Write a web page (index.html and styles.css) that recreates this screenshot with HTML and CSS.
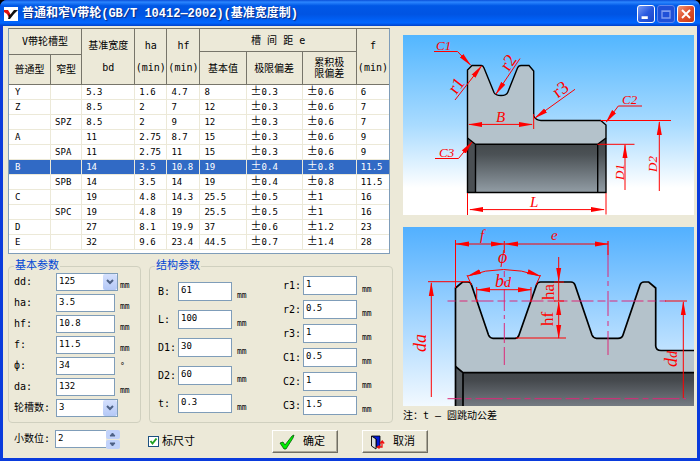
FILE: index.html
```html
<!DOCTYPE html>
<html lang="zh-CN">
<head>
<meta charset="utf-8">
<title>普通和窄V带轮</title>
<link rel="stylesheet" href="styles.css">
</head>
<body>
<div class="window">
  <header class="titlebar">
    <svg class="app-icon" viewBox="0 0 14 14" aria-hidden="true">
      <rect width="14" height="14" fill="#fff"/>
      <path d="M0 3h4l3 5-2 3-2-4-3-2z" fill="#e01010"/>
      <path d="M4 7l2 1 4-5h4l-4 4-4 5H4l1-3z" fill="#111"/>
    </svg>
    <h1>普通和窄V带轮(GB/T 10412—2002)(基准宽度制)</h1>
    <div class="winbtns">
      <button type="button" aria-label="最小化"><svg viewBox="0 0 18 18"><path d="M4 13h7" stroke="#fff" stroke-width="3"/></svg></button>
      <button type="button" class="dim" aria-label="最大化" disabled><svg viewBox="0 0 18 18"><path d="M4.500 5.500h9v8h-9zM4 6h10" fill="none" stroke="#7d9cf0" stroke-width="1.500"/></svg></button>
      <button type="button" class="close" aria-label="关闭"><svg viewBox="0 0 18 18"><path d="M4.500 4.500l9 9M13.500 4.500l-9 9" stroke="#fff" stroke-width="2.200"/></svg></button>
    </div>
  </header>
  <main class="content">
    <div class="columns">
      <section class="left">
        <div class="table-box">
          <table>
            <colgroup><col class="c1"><col class="c2"><col class="c3"><col class="c4"><col class="c5"><col class="c6"><col class="c7"><col class="c8"><col class="c9"></colgroup>
            <thead>
              <tr class="h1"><th colspan="2" rowspan="2">V带轮槽型</th><th rowspan="3" class="tall">基准宽度<br>bd</th><th rowspan="3" class="tall">ha<br>(min)</th><th rowspan="3" class="tall">hf<br>(min)</th><th colspan="3">槽 间 距 e</th><th rowspan="3" class="tall">f<br>(min)</th></tr>
              <tr class="h2"><th rowspan="2">基本值</th><th rowspan="2">极限偏差</th><th rowspan="2">累积极<br>限偏差</th></tr>
              <tr class="h3"><th>普通型</th><th>窄型</th></tr>
            </thead>
            <tbody>
              <tr><td>Y</td><td></td><td>5.3</td><td>1.6</td><td>4.7</td><td>8</td><td><i>±</i>0.3</td><td><i>±</i>0.6</td><td>6</td></tr>
              <tr><td>Z</td><td></td><td>8.5</td><td>2</td><td>7</td><td>12</td><td><i>±</i>0.3</td><td><i>±</i>0.6</td><td>7</td></tr>
              <tr><td></td><td>SPZ</td><td>8.5</td><td>2</td><td>9</td><td>12</td><td><i>±</i>0.3</td><td><i>±</i>0.6</td><td>7</td></tr>
              <tr><td>A</td><td></td><td>11</td><td>2.75</td><td>8.7</td><td>15</td><td><i>±</i>0.3</td><td><i>±</i>0.6</td><td>9</td></tr>
              <tr><td></td><td>SPA</td><td>11</td><td>2.75</td><td>11</td><td>15</td><td><i>±</i>0.3</td><td><i>±</i>0.6</td><td>9</td></tr>
              <tr class="selected"><td>B</td><td></td><td>14</td><td>3.5</td><td>10.8</td><td>19</td><td><i>±</i>0.4</td><td><i>±</i>0.8</td><td>11.5</td></tr>
              <tr><td></td><td>SPB</td><td>14</td><td>3.5</td><td>14</td><td>19</td><td><i>±</i>0.4</td><td><i>±</i>0.8</td><td>11.5</td></tr>
              <tr><td>C</td><td></td><td>19</td><td>4.8</td><td>14.3</td><td>25.5</td><td><i>±</i>0.5</td><td><i>±</i>1</td><td>16</td></tr>
              <tr><td></td><td>SPC</td><td>19</td><td>4.8</td><td>19</td><td>25.5</td><td><i>±</i>0.5</td><td><i>±</i>1</td><td>16</td></tr>
              <tr><td>D</td><td></td><td>27</td><td>8.1</td><td>19.9</td><td>37</td><td><i>±</i>0.6</td><td><i>±</i>1.2</td><td>23</td></tr>
              <tr><td>E</td><td></td><td>32</td><td>9.6</td><td>23.4</td><td>44.5</td><td><i>±</i>0.7</td><td><i>±</i>1.4</td><td>28</td></tr>
            </tbody>
          </table>
        </div>
        <div class="groups">
          <fieldset class="basic">
            <legend>基本参数</legend>
            <div class="rows">
              <div class="row"><label for="dd">dd:</label><span class="select"><select id="dd"><option>125</option></select><svg viewBox="0 0 14 16" aria-hidden="true"><path d="M4 6l3 3 3-3" fill="none" stroke="#4d6185" stroke-width="2"/></svg></span><span class="unit">mm</span></div>
              <div class="row"><label for="ha">ha:</label><input id="ha" type="text" value="3.5"><span class="unit">mm</span></div>
              <div class="row"><label for="hf">hf:</label><input id="hf" type="text" value="10.8"><span class="unit">mm</span></div>
              <div class="row"><label for="f">f:</label><input id="f" type="text" value="11.5"><span class="unit">mm</span></div>
              <div class="row"><label for="phi">ф:</label><input id="phi" type="text" value="34"><span class="unit deg">°</span></div>
              <div class="row"><label for="da">da:</label><input id="da" type="text" value="132"><span class="unit">mm</span></div>
              <div class="row"><label for="num">轮槽数:</label><span class="select"><select id="num"><option>3</option></select><svg viewBox="0 0 14 16" aria-hidden="true"><path d="M4 6l3 3 3-3" fill="none" stroke="#4d6185" stroke-width="2"/></svg></span></div>
            </div>
          </fieldset>
          <fieldset class="struct">
            <legend>结构参数</legend>
            <div class="struct-cols">
              <div class="rows wide">
                <div class="row"><label for="B">B:</label><input id="B" type="text" value="61"><span class="unit">mm</span></div>
                <div class="row"><label for="L">L:</label><input id="L" type="text" value="100"><span class="unit">mm</span></div>
                <div class="row"><label for="D1">D1:</label><input id="D1" type="text" value="30"><span class="unit">mm</span></div>
                <div class="row"><label for="D2">D2:</label><input id="D2" type="text" value="60"><span class="unit">mm</span></div>
                <div class="row"><label for="t">t:</label><input id="t" type="text" value="0.3"><span class="unit">mm</span></div>
              </div>
              <div class="rows mid">
                <div class="row"><label for="r1">r1:</label><input id="r1" type="text" value="1"><span class="unit">mm</span></div>
                <div class="row"><label for="r2">r2:</label><input id="r2" type="text" value="0.5"><span class="unit">mm</span></div>
                <div class="row"><label for="r3">r3:</label><input id="r3" type="text" value="1"><span class="unit">mm</span></div>
                <div class="row"><label for="C1">C1:</label><input id="C1" type="text" value="0.5"><span class="unit">mm</span></div>
                <div class="row"><label for="C2">C2:</label><input id="C2" type="text" value="1"><span class="unit">mm</span></div>
                <div class="row"><label for="C3">C3:</label><input id="C3" type="text" value="1.5"><span class="unit">mm</span></div>
              </div>
            </div>
          </fieldset>
        </div>
      </section>
      <section class="right">
        <svg class="figure" viewBox="0 0 291 180" role="img" aria-label="带轮剖面尺寸">
          <defs>
            <linearGradient id="sky1" x2="0" y2="1"><stop offset="0" stop-color="#52b6ff"/><stop offset=".5" stop-color="#a9dbff"/><stop offset=".85" stop-color="#fff"/></linearGradient>
            <linearGradient id="bore1" x2="0" y2="1"><stop offset="0" stop-color="#3f4447"/><stop offset=".3" stop-color="#4b5155"/><stop offset="1" stop-color="#929da5"/></linearGradient>
            <marker id="arrow" orient="auto-start-reverse" markerUnits="userSpaceOnUse" markerWidth="14" markerHeight="6" refX="13" refY="3"><path d="M0 .5L14 3 0 5.500z" fill="#f00"/></marker>
          </defs>
          <rect width="291" height="180" fill="url(#sky1)"/>
          <path d="M64.500 157.500V35L69 30.500H78.500Q80 30.500 81 33L91 57.500Q92.500 60.500 98 60.500T104.700 57.500L114.500 33Q115.500 30.500 118 30.500H126L130.700 36V81Q133 85.500 138 85.500H197.700L203 90V157.500z" fill="#b4c2cb"/>
          <path d="M64.500 103L72.500 109.300H194.700L203 103V157.500H64.500z" fill="url(#bore1)"/>
          <path d="M64.500 103L72.500 109.300V157.500H64.500z" fill="#4a4f53"/>
          <g fill="none" stroke="#000" stroke-width="1.400">
            <path d="M64.500 157.500V35L69 30.500H78.500Q80 30.500 81 33L91 57.500Q92.500 60.500 98 60.500T104.700 57.500L114.500 33Q115.500 30.500 118 30.500H126L130.700 36V81Q133 85.500 138 85.500H197.700L203 90V157.500z"/>
            <path d="M64.500 103L72.500 109.300V157.500M72.500 109.300H194.700V157.500M194.700 109.300L203 103"/>
          </g>
          <g fill="none" stroke="#f00" stroke-width="1">
            <path d="M64.500 158V180M203 158V179.500M130.700 79V94M197.700 85.500H268M194.500 109.300H231.500"/>
            <path d="M67 174.600H201" marker-start="url(#arrow)" marker-end="url(#arrow)"/>
            <path d="M66 89.400H129" marker-start="url(#arrow)" marker-end="url(#arrow)"/>
            <path d="M31 16.500H54.500L67.500 30" marker-end="url(#arrow)"/>
            <path d="M32 123.500H55.500L69 107" marker-end="url(#arrow)"/>
            <path d="M52 65L78.500 31" marker-end="url(#arrow)"/>
            <path d="M117 23.500L93 59" marker-end="url(#arrow)"/>
            <path d="M172 54.300L132 83" marker-end="url(#arrow)"/>
            <path d="M239 71H215.300L203.300 87" marker-end="url(#arrow)"/>
            <path d="M256.300 156V87" marker-end="url(#arrow)"/>
            <path d="M222 155V110" marker-end="url(#arrow)"/>
          </g>
          <g class="dims">
            <text x="33" y="15">C1</text><text x="36" y="122">C3</text><text x="219" y="69">C2</text>
            <text class="m" x="93" y="87">B</text><text class="m" x="127" y="172">L</text>
            <text class="r" transform="translate(54 51) rotate(-52)" y="5">r1</text>
            <text class="r" transform="translate(106 28) rotate(-55)" y="5">r2</text>
            <text class="r" transform="translate(158 55) rotate(-36)" y="5">r3</text>
            <text class="c" transform="translate(216 137) rotate(-90)" y="5">D1</text>
            <text class="c" transform="translate(249 129) rotate(-90)" y="5">D2</text>
          </g>
        </svg>
        <svg class="figure" viewBox="0 0 291 179" role="img" aria-label="轮槽尺寸">
          <defs>
            <linearGradient id="sky2" x2="0" y2="1"><stop offset="0" stop-color="#52b0ff"/><stop offset="1" stop-color="#f2f9ff"/></linearGradient>
            <linearGradient id="bore2" x2="0" y2="1"><stop offset="0" stop-color="#3f4447"/><stop offset=".35" stop-color="#45494d"/><stop offset="1" stop-color="#747a82"/></linearGradient>
          </defs>
          <rect width="291" height="179" fill="url(#sky2)"/>
          <path d="M52.500 179V61L59.500 55H65Q67.500 55 68.500 58L85.500 108Q87 111.300 90 111.300H112Q115 111.300 116 108L133.500 58Q134.500 55 137.500 55H168Q171 55 172 58L189 108Q190.500 111.300 193.500 111.300H215Q219 111.300 220 108L237 58Q238 55 241 55H245.700L252.700 61V119Q253 123.500 258 123.500H291V179z" fill="#b4c2cb"/>
          <path d="M52.500 139.500L60 145.700H291V179H52.500z" fill="url(#bore2)"/>
          <path d="M52.500 139.500L60 145.700V179H52.500z" fill="#555b60"/>
          <g fill="none" stroke="#000" stroke-width="1.700">
            <path d="M52.500 179V61L59.500 55H65Q67.500 55 68.500 58L85.500 108Q87 111.300 90 111.300H112Q115 111.300 116 108L133.500 58Q134.500 55 137.500 55H168Q171 55 172 58L189 108Q190.500 111.300 193.500 111.300H215Q219 111.300 220 108L237 58Q238 55 241 55H245.700L252.700 61V119Q253 123.500 258 123.500H291"/>
            <path d="M52.500 139.500L60 145.700V179M60 145.700H291"/>
          </g>
          <g fill="none" stroke="#dc2878" stroke-width="1">
            <path d="M44.500 74H263" stroke-dasharray="8 4 8 4 22 4"/>
            <path d="M44.500 171.700H283" stroke-dasharray="14 4 6 4 27 4"/>
            <path d="M101.300 44V138" stroke-dasharray="6 4 4 4 22 4 4 4 20 4 36"/>
            <path d="M205 14V128" stroke-dasharray="36 4 5 5 25 5 5 5 30"/>
          </g>
          <g fill="none" stroke="#f00" stroke-width="1">
            <path d="M52.500 13V61M101.300 14V26M205 14V28M64 48L68.500 58M137.500 48L133 58M73.700 60V75M128 60V75M25 54.700H66M151 55H161M151 74H161M113 111H163M262 74H284M155.700 55V74"/>
            <path d="M53 17H101" marker-start="url(#arrow)" marker-end="url(#arrow)"/>
            <path d="M102 17H205" marker-start="url(#arrow)" marker-end="url(#arrow)"/>
            <path d="M74 62.700H128" marker-start="url(#arrow)" marker-end="url(#arrow)"/>
            <path d="M155.700 75V111" marker-start="url(#arrow)" marker-end="url(#arrow)"/>
            <path d="M65 49Q100 36 137 49" marker-start="url(#arrow)" marker-end="url(#arrow)"/>
            <path d="M28.300 170V56" marker-end="url(#arrow)"/>
            <path d="M155.700 30V54" marker-end="url(#arrow)"/>
            <path d="M280.300 171V75" marker-end="url(#arrow)"/>
          </g>
          <g class="dims">
            <text class="f" x="77" y="13">f</text><text class="f" x="148" y="13">e</text>
            <text class="b" x="95" y="36">ϕ</text>
            <text class="b" x="92" y="60">b<tspan class="sub">d</tspan></text>
            <text class="b c" transform="translate(18 116) rotate(-90)" y="5">da</text>
            <text class="u c" transform="translate(146 65) rotate(-90)" y="5">ha</text>
            <text class="u c" transform="translate(145 92) rotate(-90)" y="5">hf</text>
            <text class="b c" transform="translate(269 132) rotate(-90)" y="5">d<tspan class="sub">d</tspan></text>
          </g>
        </svg>
        <p class="note">注：t — 圆跳动公差</p>
      </section>
    </div>
    <footer class="footer">
      <div class="row places"><label for="dec">小数位:</label><input id="dec" type="text" value="2"><span class="spin"><button type="button" aria-label="增加"><svg viewBox="0 0 13 8"><path d="M4 6l2.500-3L9 6z" fill="#4d6185" stroke="#4d6185"/></svg></button><button type="button" aria-label="减少"><svg viewBox="0 0 13 8"><path d="M4 3l2.500 3L9 3z" fill="#4d6185" stroke="#4d6185"/></svg></button></span></div>
      <label class="check"><input type="checkbox" checked><svg viewBox="0 0 11 11" aria-hidden="true"><path d="M2.500 5l2 2.500 4-5" fill="none" stroke="#21a121" stroke-width="2"/></svg>标尺寸</label>
      <div class="actions">
        <button type="button" class="btn"><svg viewBox="0 0 16 16" aria-hidden="true"><path d="M1 9l3-1 2 3 7-9 2-1-1 3-7 11H5z" fill="#0e0" stroke="#075c07" stroke-width=".8"/></svg>确定</button>
        <button type="button" class="btn"><svg viewBox="0 0 16 16" aria-hidden="true"><path d="M3 2h8v11H7V5L3 3z" fill="#0018d8" stroke="#000" stroke-width=".8"/><path d="M2.500 2L7 5v10l-4.500-3z" fill="#d8dce0" stroke="#000" stroke-width=".9"/><path d="M9 13h4V8M11 9.500L13.200 7l2 2.500M10.500 11.500L8.500 13l2 1.500" fill="none" stroke="#f01010" stroke-width="1.300"/></svg>取消</button>
      </div>
    </footer>
  </main>
</div>
</body>
</html>
```
FILE: styles.css
```css
* { box-sizing: border-box; }

body {
  margin: 0;
  background: #000;
  color: #000;
  font: 9px/12px "DejaVu Sans Mono", "Noto Sans CJK SC", monospace;
}

button, input, select { font: inherit; color: inherit; }

.window {
  display: flex;
  flex-direction: column;
  min-height: 100vh;
  padding: 0 3px 3px;
  border-radius: 7px 7px 0 0;
  background: #0a3bdc;
  overflow: hidden;
}

.titlebar {
  display: flex;
  align-items: center;
  gap: 4px;
  height: 26px;
  margin: 0 -3px;
  padding: 1px 5px 0 4px;
  background: linear-gradient(#0a4fd8, #2b86ff 8%, #0058e6 22%, #0054e3 55%, #0066ff 88%, #0040c8);
}

.app-icon { width: 14px; height: 14px; }

h1 {
  flex: 1;
  margin: 0;
  color: #fff;
  font: bold 12px/16px "Liberation Mono", "Noto Sans CJK SC", monospace;
  text-shadow: 1px 1px 1px #0a2a80;
  white-space: nowrap;
}

.winbtns { display: flex; gap: 2px; }

.winbtns button {
  width: 18px;
  height: 18px;
  padding: 0;
  border: 1px solid #fff;
  border-radius: 3px;
  background: linear-gradient(135deg, #7a9cf4, #2a5ae0 50%, #1c46c8);
}

.winbtns svg { display: block; width: 16px; height: 16px; }
.winbtns .dim { border-color: #5c86ee; background: #1f50d8; }
.winbtns .close { background: linear-gradient(135deg, #f09878, #e0502c 50%, #c83a14); }

.content {
  flex: 1;
  padding: 2px 3px 4px 5px;
  background: #ece9d8;
}

.columns {
  display: grid;
  grid-template-columns: minmax(0, 385fr) minmax(0, 291fr);
  gap: 10px;
}

.table-box {
  margin-right: 3px;
  padding-bottom: 3px;
  border: 1px solid #7f9db9;
  border-top-color: #77756a;
  background: #fff;
}

table {
  width: 100%;
  border-collapse: separate;
  border-spacing: 0;
  table-layout: fixed;
}

.c1 { width: 42px; }
.c2 { width: 31px; }
.c3 { width: 53px; }
.c4 { width: 32px; }
.c5 { width: 33px; }
.c6 { width: 46px; }
.c7 { width: 56px; }
.c8 { width: 54px; }
.c9 { width: 32px; }

.h1 { height: 23px; }
.h2 { height: 3px; }
.h3 { height: 30px; }

th {
  padding: 0;
  border: solid #77756a;
  border-width: 0 1px 1px 0;
  background: #ece9d8;
  font-size: 10px;
  font-weight: normal;
  line-height: 11px;
  white-space: nowrap;
}

.h1 th:last-child { border-right-width: 0; }
.tall { line-height: 22px; }

td {
  height: 15px;
  padding: 0 0 0 4px;
  border: solid #ece9d8;
  border-width: 0 1px 1px 0;
  line-height: 14px;
  white-space: nowrap;
}

td:first-child { padding-left: 6px; }
td:last-child { border-right-width: 0; }
td i { font: normal 11px/1px "Noto Sans CJK SC", sans-serif; }
.selected td { background: #316ac5; color: #fff; }

.groups {
  display: grid;
  grid-template-columns: 133fr 244fr;
  gap: 8px;
  margin-top: 5px;
}

fieldset {
  min-width: 0;
  margin: 0;
  padding: 0 5px 5px;
  border: 1px solid #d0d0bf;
  border-radius: 4px;
}

legend {
  padding: 0 1px;
  color: #0046d5;
  font-size: 11px;
  line-height: 14px;
}

.rows { display: grid; gap: 3px; }
.row { display: flex; align-items: center; height: 18px; }
.row label { flex: none; width: 42px; white-space: nowrap; font-size: 10px; }

.row input, .row select {
  flex: 1;
  min-width: 0;
  width: 100%;
  height: 18px;
  margin: 0;
  padding: 0 2px 3px;
  border: 1px solid #7f9db9;
  border-radius: 0;
  background: #fff;
}

.row select { appearance: none; }
.unit { flex: none; align-self: flex-end; width: 18px; padding-left: 5px; font-size: 8px; line-height: 11px; }
.deg { align-self: center; }
.basic .unit { width: 20px; }
.basic .select + .unit { width: 17px; padding-left: 2px; }
.select { position: relative; display: flex; flex: 1; }
.basic .row:last-child .select { margin-right: 17px; }

.select svg {
  position: absolute;
  top: 1px;
  right: 1px;
  width: 14px;
  height: 16px;
  border-radius: 2px;
  background: linear-gradient(#d5e0fd, #b4c8f6);
  pointer-events: none;
}

.struct-cols { display: grid; grid-template-columns: 1fr 1fr; gap: 33px; padding: 1px 12px 0 3px; }
.struct-cols .row { height: 19px; }
.struct-cols .row input { height: 19px; }
.struct-cols .row label { width: 20px; }
.struct-cols .wide { gap: 9px; align-content: start; padding-top: 8px; }
.struct-cols .mid { gap: 5px; align-content: start; padding-top: 2px; }

.figure { display: block; width: 100%; height: auto; margin-top: 7px; overflow: visible; }
.figure + .figure { margin-top: 12px; }

.dims text { fill: #f00; font: italic 13px "Liberation Serif", serif; }
.dims .m { font-size: 15px; }
.dims .r { font-size: 18px; font-style: normal; text-anchor: middle; }
.dims .b { font-size: 18px; }
.dims .f { font-size: 15px; }
.dims .u { font-size: 17px; font-style: normal; }
.dims .c { text-anchor: middle; }
.dims .sub { font-size: 14px; }

.note { margin: 3px 0 0; font-size: 10px; line-height: 14px; }

.footer { display: flex; align-items: center; margin-top: 7px; padding-left: 6px; }
.places { align-self: flex-start; width: 106px; }
.places label { width: 41px; }
.places input { border-right: 0; }
.spin { display: grid; width: 14px; gap: 1px; }

.spin button {
  height: 9px;
  padding: 0;
  border: 0;
  border-radius: 2px;
  background: #c1d2fa;
}

.spin svg { display: block; width: 13px; height: 8px; }

.check { position: relative; display: flex; align-items: center; gap: 3px; margin-left: 28px; font-size: 11px; }

.check input {
  appearance: none;
  width: 11px;
  height: 11px;
  margin: 0;
  border: 1px solid #1c5180;
  background: #fff;
}

.check svg { position: absolute; left: 0; width: 11px; height: 11px; pointer-events: none; }

.actions { display: flex; gap: 24px; margin-left: 77px; }

.btn {
  display: flex;
  align-items: center;
  gap: 8px;
  width: 66px;
  height: 23px;
  padding: 0 6px;
  border: 1px solid;
  border-color: #fff #716f64 #716f64 #fff;
  background: #ece9d8;
  box-shadow: inset -1px -1px #aca899;
  font-size: 11px;
}

.btn svg { width: 16px; height: 16px; }
```
